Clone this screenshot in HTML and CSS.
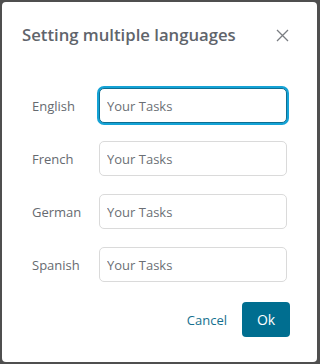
FILE: index.html
```html
<!DOCTYPE html>
<html>
<head>
<meta charset="utf-8">
<link rel="stylesheet" href="styles.css">
</head>
<body>
<div class="dialog">
  <div class="header">
    <div class="title">Setting multiple languages</div>
    <button class="close" aria-label="Close">
      <svg width="13" height="13" viewBox="0 0 13 13"><path d="M1 1L12 12M12 1L1 12" stroke="#7a7d82" stroke-width="1.3" fill="none"/></svg>
    </button>
  </div>
  <div class="form">
    <div class="row"><label class="label">English</label><input class="input focused" value="Your Tasks"></div>
    <div class="row"><label class="label">French</label><input class="input" value="Your Tasks"></div>
    <div class="row"><label class="label">German</label><input class="input" value="Your Tasks"></div>
    <div class="row"><label class="label">Spanish</label><input class="input" value="Your Tasks"></div>
  </div>
  <div class="footer">
    <button class="cancel">Cancel</button>
    <button class="ok">Ok</button>
  </div>
</div>
</body>
</html>
```
FILE: styles.css
```css
html, body {
  margin: 0;
  padding: 0;
}
body {
  background: #4f4f4f;
  width: 317px;
  height: 364px;
  overflow: hidden;
  font-family: "Open Sans", "Noto Sans", sans-serif;
}
.dialog {
  margin: 2px 0 0 2px;
  width: 315px;
  height: 360px;
  background: #fff;
  border-radius: 4px;
  box-sizing: border-box;
  padding: 21px 27px 0 30px;
  display: flex;
  flex-direction: column;
}
.header {
  display: flex;
  align-items: center;
  justify-content: space-between;
  height: 24px;
  margin-left: -10px;
  margin-right: 1px;
}
.title {
  font-size: 16.7px;
  font-weight: 600;
  color: #60646b;
  line-height: 24px;
}
.close {
  border: 0;
  background: none;
  padding: 0;
  width: 13px;
  height: 13px;
  display: flex;
}
.form {
  margin-top: 41px;
  display: flex;
  flex-direction: column;
  gap: 18px;
}
.row {
  display: flex;
  align-items: center;
  height: 35px;
}
.label {
  width: 67px;
  font-size: 13px;
  color: #666a70;
}
.input {
  width: 188px;
  height: 35px;
  box-sizing: border-box;
  border: 1px solid #dadada;
  border-radius: 5px;
  padding: 0 7px;
  font-family: inherit;
  font-size: 13px;
  color: #6b6f75;
  outline: none;
}
.input.focused {
  border-color: #0e6f93;
  box-shadow: 0 0 0 2px #14a3d6;
}
.footer {
  margin-top: 20px;
  display: flex;
  justify-content: flex-end;
  align-items: center;
  gap: 15px;
}
.cancel {
  border: 0;
  background: none;
  padding: 0;
  font-family: inherit;
  font-size: 13px;
  color: #15708e;
}
.ok {
  border: 0;
  background: #006e90;
  color: #fff;
  border-radius: 4px;
  width: 48px;
  height: 35px;
  font-family: inherit;
  font-size: 14px;
}
```
